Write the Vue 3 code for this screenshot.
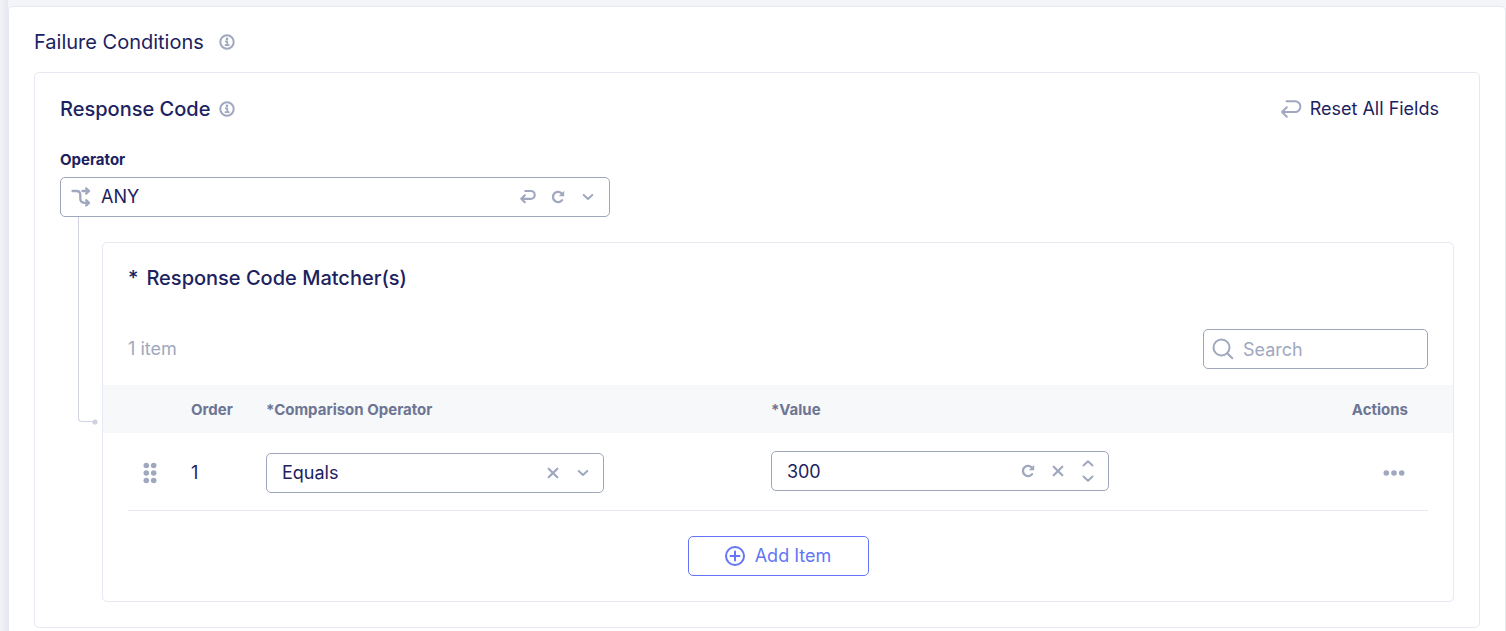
<script setup>
import { ref } from 'vue'

const operator = ref('ANY')
const search = ref('')
const rows = ref([{ id: 1, comparison: 'Equals', value: '300' }])

function addItem() {
  rows.value.push({ id: rows.value.length + 1, comparison: 'Equals', value: '' })
}
</script>

<template>
  <main class="page">
    <section class="card">
      <header class="card-head">
        <h1>Failure Conditions</h1>
        <button class="icon-btn" aria-label="About failure conditions">
          <svg width="16" height="16" viewBox="0 0 16 16" class="stroke">
            <circle cx="8" cy="8" r="6.7" stroke-width="2" />
            <path d="M6 7.4h2.3v3.8M5.7 11.2h4.8" stroke-width="1.8" stroke-linecap="butt" />
            <circle cx="8" cy="4.9" r="1.3" class="fill" />
          </svg>
        </button>
      </header>

      <section class="panel">
        <header class="panel-head">
          <h2>Response Code</h2>
          <button class="icon-btn" aria-label="About response code">
            <svg width="16" height="16" viewBox="0 0 16 16" class="stroke">
              <circle cx="8" cy="8" r="6.7" stroke-width="2" />
              <path d="M6 7.4h2.3v3.8M5.7 11.2h4.8" stroke-width="1.8" stroke-linecap="butt" />
              <circle cx="8" cy="4.9" r="1.3" class="fill" />
            </svg>
          </button>
          <button class="reset">
            <svg width="22" height="20" viewBox="0 0 22 20" class="stroke">
              <path d="M6.5 2.2H15a5.3 5.3 0 0 1 0 10.8H2M6.8 8.3 2 13l4.8 4.7" stroke-width="2" />
            </svg>
            Reset All Fields
          </button>
        </header>

        <label class="field-label" for="operator">Operator</label>
        <div class="field operator">
          <svg width="20" height="20" viewBox="0 0 20 20" class="stroke">
            <path d="M1.5 4h3.8c2.6 0 4 1.6 4 4v3.6c0 2.6 1.6 4.2 4.2 4.2H18M11.5 4H18M15.2 1.4 18 4l-2.8 2.6M15.2 13.2l2.8 2.6-2.8 2.6" stroke-width="2.3" />
          </svg>
          <select id="operator" v-model="operator">
            <option>ANY</option>
            <option>ALL</option>
          </select>
          <button class="icon-btn" aria-label="Reset operator">
            <svg width="16" height="16" viewBox="0 0 16 16" class="stroke">
              <path d="M5.3 2h5.5a3.9 3.9 0 0 1 0 7.8H1.5M4.8 6.3 1.3 9.8l3.5 3.4" stroke-width="2.2" />
            </svg>
          </button>
          <button class="icon-btn" aria-label="Reload operator">
            <svg width="16" height="16" viewBox="0 0 16 16" class="stroke">
              <path d="M12.1 11.1a5.1 5.1 0 1 1-.5-6.8" stroke-width="2.3" />
              <path d="M14.2 1.8v5.4H8.8z" class="fill" />
            </svg>
          </button>
          <svg width="16" height="16" viewBox="0 0 16 16" class="stroke chevron">
            <path d="m3.7 6 4.3 4 4.3-4" stroke-width="2" />
          </svg>
        </div>

        <section class="matchers">
          <svg class="elbow-dot" width="6" height="6" viewBox="0 0 6 6"><circle cx="3" cy="3" r="2.6" /></svg>
          <h2 class="matchers-title"><span>*</span>Response Code Matcher(s)</h2>

          <div class="toolbar">
            <p>{{ rows.length }} {{ rows.length === 1 ? 'item' : 'items' }}</p>
            <label class="field search">
              <svg width="22" height="22" viewBox="0 0 22 22" class="stroke">
                <circle cx="9.5" cy="9.5" r="8" stroke-width="2" />
                <path d="m15.3 15.3 5 5" stroke-width="2" />
              </svg>
              <input v-model="search" type="text" placeholder="Search" aria-label="Search" />
            </label>
          </div>

          <table>
            <colgroup>
              <col class="col-drag" />
              <col class="col-order" />
              <col class="col-input" />
              <col class="col-input" />
              <col />
            </colgroup>
            <thead>
              <tr>
                <th></th>
                <th>Order</th>
                <th>*Comparison Operator</th>
                <th>*Value</th>
                <th class="actions">Actions</th>
              </tr>
            </thead>
            <tbody>
              <tr v-for="(row, index) in rows" :key="row.id">
                <td class="drag">
                  <button class="icon-btn" aria-label="Drag row">
                    <svg width="14" height="22" viewBox="0 0 14 22" class="dots">
                      <template v-for="y in [3.5, 11, 18.5]" :key="y">
                        <circle cx="3.3" :cy="y" r="2.8" />
                        <circle cx="10.7" :cy="y" r="2.8" />
                      </template>
                    </svg>
                  </button>
                </td>
                <td class="order">{{ index + 1 }}</td>
                <td>
                  <div class="field cell">
                    <select v-model="row.comparison" aria-label="Comparison Operator">
                      <option>Equals</option>
                      <option>Not Equals</option>
                    </select>
                    <button class="icon-btn" aria-label="Clear comparison operator">
                      <svg width="16" height="16" viewBox="0 0 16 16" class="stroke">
                        <path d="m3.7 3.7 8.6 8.6M12.3 3.7l-8.6 8.6" stroke-width="2.2" />
                      </svg>
                    </button>
                    <svg width="16" height="16" viewBox="0 0 16 16" class="stroke chevron">
                      <path d="m3.7 6 4.3 4 4.3-4" stroke-width="2" />
                    </svg>
                  </div>
                </td>
                <td class="value">
                  <div class="field cell">
                    <input v-model="row.value" type="text" inputmode="numeric" aria-label="Value" />
                    <button class="icon-btn" aria-label="Reload value">
                      <svg width="16" height="16" viewBox="0 0 16 16" class="stroke">
                        <path d="M12.1 11.1a5.1 5.1 0 1 1-.5-6.8" stroke-width="2.3" />
                        <path d="M14.2 1.8v5.4H8.8z" class="fill" />
                      </svg>
                    </button>
                    <button class="icon-btn" aria-label="Clear value">
                      <svg width="16" height="16" viewBox="0 0 16 16" class="stroke">
                        <path d="m3.7 3.7 8.6 8.6M12.3 3.7l-8.6 8.6" stroke-width="2.2" />
                      </svg>
                    </button>
                    <span class="stepper">
                      <button class="icon-btn" aria-label="Increase value">
                        <svg width="16" height="15" viewBox="0 0 16 15" class="stroke">
                          <path d="M3.5 9.5 8 5.2l4.5 4.3" stroke-width="2" />
                        </svg>
                      </button>
                      <button class="icon-btn" aria-label="Decrease value">
                        <svg width="16" height="15" viewBox="0 0 16 15" class="stroke">
                          <path d="M3.5 5.5 8 9.8l4.5-4.3" stroke-width="2" />
                        </svg>
                      </button>
                    </span>
                  </div>
                </td>
                <td class="actions menu">
                  <button class="icon-btn" aria-label="Row actions">
                    <svg width="22" height="6" viewBox="0 0 22 6" class="dots">
                      <circle cx="3.3" cy="3" r="2.8" />
                      <circle cx="11" cy="3" r="2.8" />
                      <circle cx="18.7" cy="3" r="2.8" />
                    </svg>
                  </button>
                </td>
              </tr>
            </tbody>
          </table>

          <footer>
            <button class="add" @click="addItem">
              <svg width="20" height="20" viewBox="0 0 20 20">
                <circle cx="10" cy="10" r="9" stroke-width="2" />
                <path d="M10 5.5v9M5.5 10h9" stroke-width="2" />
              </svg>
              Add Item
            </button>
          </footer>
        </section>
      </section>
    </section>
  </main>
</template>

<style>
body {
  margin: 0;
}
</style>

<style scoped>
* {
  box-sizing: border-box;
}

.page {
  display: flex;
  flex-direction: column;
  min-height: 100vh;
  padding: 6px 0 0 8px;
  background: linear-gradient(90deg, #f2f3f7, #e6e8f1 8px, #f4f5f9 8px);
  color: #1c2260;
  font-family: Inter, "Liberation Sans", sans-serif;
  font-size: 18px;
  line-height: 24px;
}

.card {
  flex: 1;
  padding: 23px 25px 3px;
  background: #fff;
  border: 1px solid #e6e8f2;
  border-bottom: 0;
  border-radius: 5px 5px 0 0;
}

h1,
h2,
p {
  margin: 0;
}

h1,
h2 {
  font-size: 20px;
  line-height: 24px;
}

h1 {
  font-weight: 400;
}

h2 {
  font-weight: 500;
}

button,
input,
select {
  padding: 0;
  border: 0;
  background: none;
  color: inherit;
  font: inherit;
}

button {
  cursor: pointer;
}

svg {
  display: block;
  flex: none;
}

.stroke {
  fill: none;
  stroke: #a0a8bf;
  stroke-linecap: round;
  stroke-linejoin: round;
}

.stroke .fill,
.dots {
  fill: #a0a8bf;
  stroke: none;
}

.card-head {
  display: flex;
  align-items: center;
  gap: 15px;
  margin-bottom: 18px;
}

.panel {
  padding: 24px 25px 25px;
  border: 1px solid #e6e8f2;
  border-radius: 5px;
}

.panel-head {
  display: flex;
  align-items: center;
  gap: 9px;
  margin-bottom: 29px;
}

.reset {
  display: flex;
  align-items: center;
  gap: 8px;
  margin-left: auto;
  padding-right: 15px;
}

.field-label {
  display: block;
  margin-bottom: 7px;
  font-size: 15px;
  font-weight: 700;
  line-height: 20px;
}

.field {
  display: flex;
  align-items: center;
  height: 40px;
  border: 1px solid #9fa6bb;
  border-radius: 5px;
  background: #fff;
}

.field select,
.field input {
  flex: 1;
  min-width: 0;
  height: 100%;
  appearance: none;
  outline: 0;
}

.chevron {
  pointer-events: none;
}

.operator {
  gap: 14px;
  max-width: 550px;
  padding: 0 13px 0 10px;
}

.operator select {
  margin-left: -4px;
}

.matchers {
  position: relative;
  margin: 25px 0 0 42px;
  padding-top: 23px;
  border: 1px solid #e6e8f2;
  border-radius: 5px;
}

.matchers::before {
  content: "";
  position: absolute;
  top: -26px;
  bottom: 50%;
  left: -25px;
  width: 14px;
  border: solid #cfd2e0;
  border-width: 0 0 1px 1px;
  border-bottom-left-radius: 4px;
}

.elbow-dot {
  position: absolute;
  top: 50%;
  left: -11px;
  margin-top: -3px;
  fill: #cfd2e0;
}

.matchers-title {
  display: flex;
  gap: 8px;
  margin: 0 25px 39px;
}

.toolbar {
  display: flex;
  align-items: center;
  justify-content: space-between;
  margin: 0 25px 16px;
  color: #a0a8bf;
}

.search {
  gap: 9px;
  width: 225px;
  padding: 0 8px;
}

.search input::placeholder {
  color: #a0a8bf;
  opacity: 1;
}

table {
  width: 100%;
  border-collapse: collapse;
  table-layout: fixed;
}

.col-drag {
  width: 88px;
}

.col-order {
  width: 75px;
}

.col-input {
  width: 37.4%;
}

thead {
  background: #f6f8fa;
}

th {
  height: 48px;
  padding: 2px 0 0;
  color: #6d7593;
  font-size: 15px;
  font-weight: 700;
  line-height: 20px;
  text-align: left;
}

td {
  padding: 20px 0 17px;
  vertical-align: top;
}

.drag {
  padding: 29px 0 0 40px;
}

.order {
  padding-top: 28px;
}

.value {
  padding: 18px 0 19px;
}

.actions {
  padding-right: 45px;
  text-align: right;
}

.menu {
  padding: 37px 48px 0 0;
}

.menu button {
  display: inline-block;
  vertical-align: top;
}

.cell {
  gap: 14px;
  width: 67%;
  padding: 0 12px 0 15px;
}

.stepper {
  display: flex;
  flex-direction: column;
}

footer {
  display: flex;
  justify-content: center;
  margin: 0 25px;
  padding: 25px 0;
  border-top: 1px solid #e6e8f2;
}

.add {
  display: flex;
  align-items: center;
  justify-content: center;
  gap: 10px;
  width: 181px;
  height: 40px;
  border: 1px solid #6376f5;
  border-radius: 5px;
  color: #6376f5;
}

.add svg {
  fill: none;
  stroke: #6376f5;
  stroke-linecap: round;
}
</style>
